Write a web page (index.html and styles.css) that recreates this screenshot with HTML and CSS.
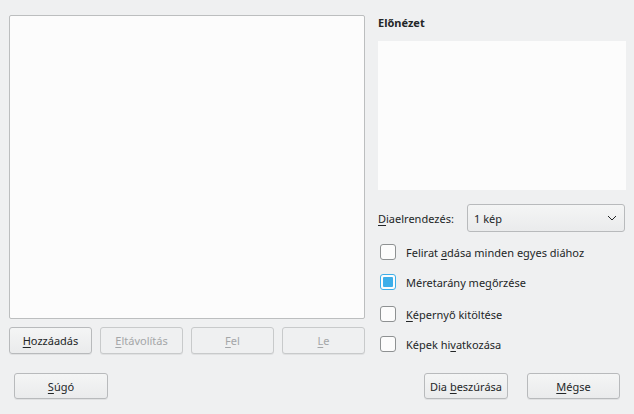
FILE: index.html
```html
<!DOCTYPE html>
<html lang="hu">
<head>
<meta charset="utf-8">
<title>Diák beszúrása</title>
<link rel="stylesheet" href="styles.css">
</head>
<body>
<div class="dialog">
  <div class="main">
    <div class="left">
      <div class="list"></div>
      <div class="list-buttons">
        <button class="btn"><u>H</u>ozzáadás</button>
        <button class="btn disabled"><u>E</u>ltávolítás</button>
        <button class="btn disabled"><u>F</u>el</button>
        <button class="btn disabled"><u>L</u>e</button>
      </div>
    </div>
    <div class="right">
      <div class="title">Előnézet</div>
      <div class="preview"></div>
      <div class="combo-row">
        <span class="combo-label"><u>D</u>iaelrendezés:</span>
        <div class="combo">
          <span>1 kép</span>
          <svg class="chev" width="10" height="6" viewBox="0 0 10 6"><polyline points="1,1 5,5 9,1" fill="none" stroke="#232627" stroke-width="1"/></svg>
        </div>
      </div>
      <div class="checks">
        <label class="check"><span class="box"></span><span>Felirat <u>a</u>dása minden egyes diához</span></label>
        <label class="check"><span class="box on"></span><span>Méretarány me<u>g</u>őrzése</span></label>
        <label class="check"><span class="box"></span><span><u>K</u>épernyő kitöltése</span></label>
        <label class="check"><span class="box"></span><span>Képek hi<u>v</u>atkozása</span></label>
      </div>
    </div>
  </div>
  <div class="footer">
    <button class="btn help"><u>S</u>úgó</button>
    <div class="spacer"></div>
    <button class="btn insert">Dia <u>b</u>eszúrása</button>
    <button class="btn cancel"><u>M</u>égse</button>
  </div>
</div>
</body>
</html>
```

FILE: styles.css
```css
html, body {
  margin: 0;
  padding: 0;
  background: #eff0f1;
}
body {
  font-family: "Noto Sans", "DejaVu Sans", sans-serif;
  font-size: 11px;
  color: #232627;
  width: 634px;
  height: 414px;
  overflow: hidden;
}
u {
  text-decoration: underline;
  text-underline-offset: 2px;
}
.dialog {
  display: flex;
  flex-direction: column;
}
.main {
  display: flex;
  padding: 15px 8px 0 9px;
  gap: 13px;
}
.left {
  width: 356px;
  display: flex;
  flex-direction: column;
  gap: 8px;
}
.list {
  height: 302px;
  background: #fcfcfc;
  border: 1px solid #bcbebf;
  border-radius: 2px;
}
.list-buttons {
  display: flex;
  gap: 8px;
}
.btn {
  font-family: inherit;
  font-size: 11px;
  color: #232627;
  background: linear-gradient(#f4f5f5, #eaebec);
  border: 1px solid #b8babc;
  border-radius: 3px;
  box-shadow: 0 1px 0 rgba(0,0,0,0.06);
  padding: 0;
  height: 27px;
  width: 83px;
  text-align: center;
}
.btn.disabled {
  color: #a4a6a8;
  background: #eff0f1;
  border-color: #c8cacb;
}
.right {
  width: 248px;
  display: flex;
  flex-direction: column;
}
.title {
  font-weight: bold;
  height: 17px;
  line-height: 15px;
  margin-bottom: 9px;
}
.preview {
  height: 149px;
  background: #fcfcfc;
}
.combo-row {
  display: flex;
  align-items: center;
  margin-top: 14px;
  gap: 14px;
}
.combo-label {
  width: 75px;
}
.combo {
  flex: 1;
  height: 28px;
  box-sizing: border-box;
  margin-right: 1px;
  border: 1px solid #b8babc;
  border-radius: 3px;
  background: linear-gradient(#f4f5f5, #eaebec);
  display: flex;
  align-items: center;
  justify-content: space-between;
  padding: 0 7px 0 6px;
}
.checks {
  display: flex;
  flex-direction: column;
  margin-top: 12px;
  gap: 14px;
}
.check {
  display: flex;
  align-items: center;
  gap: 10px;
  height: 16px;
  margin-left: 2px;
}
.check:nth-child(3) {
  margin-top: 2px;
}
.box {
  width: 16px;
  height: 16px;
  box-sizing: border-box;
  border: 1px solid #8e9192;
  border-radius: 3px;
  background: #fcfcfc;
  position: relative;
}
.box.on {
  border-color: #3daee9;
}
.box.on::after {
  content: "";
  position: absolute;
  left: 2px;
  top: 2px;
  width: 10px;
  height: 10px;
  background: #3daee9;
  border-radius: 1px;
}
.footer {
  display: flex;
  padding: 0 14px;
  margin-top: 19px;
  gap: 19px;
}
.footer .btn {
  height: 26px;
}
.spacer {
  flex: 1;
}
.help { width: 94px; }
.insert { width: 84px; }
.cancel { width: 93px; }
```
